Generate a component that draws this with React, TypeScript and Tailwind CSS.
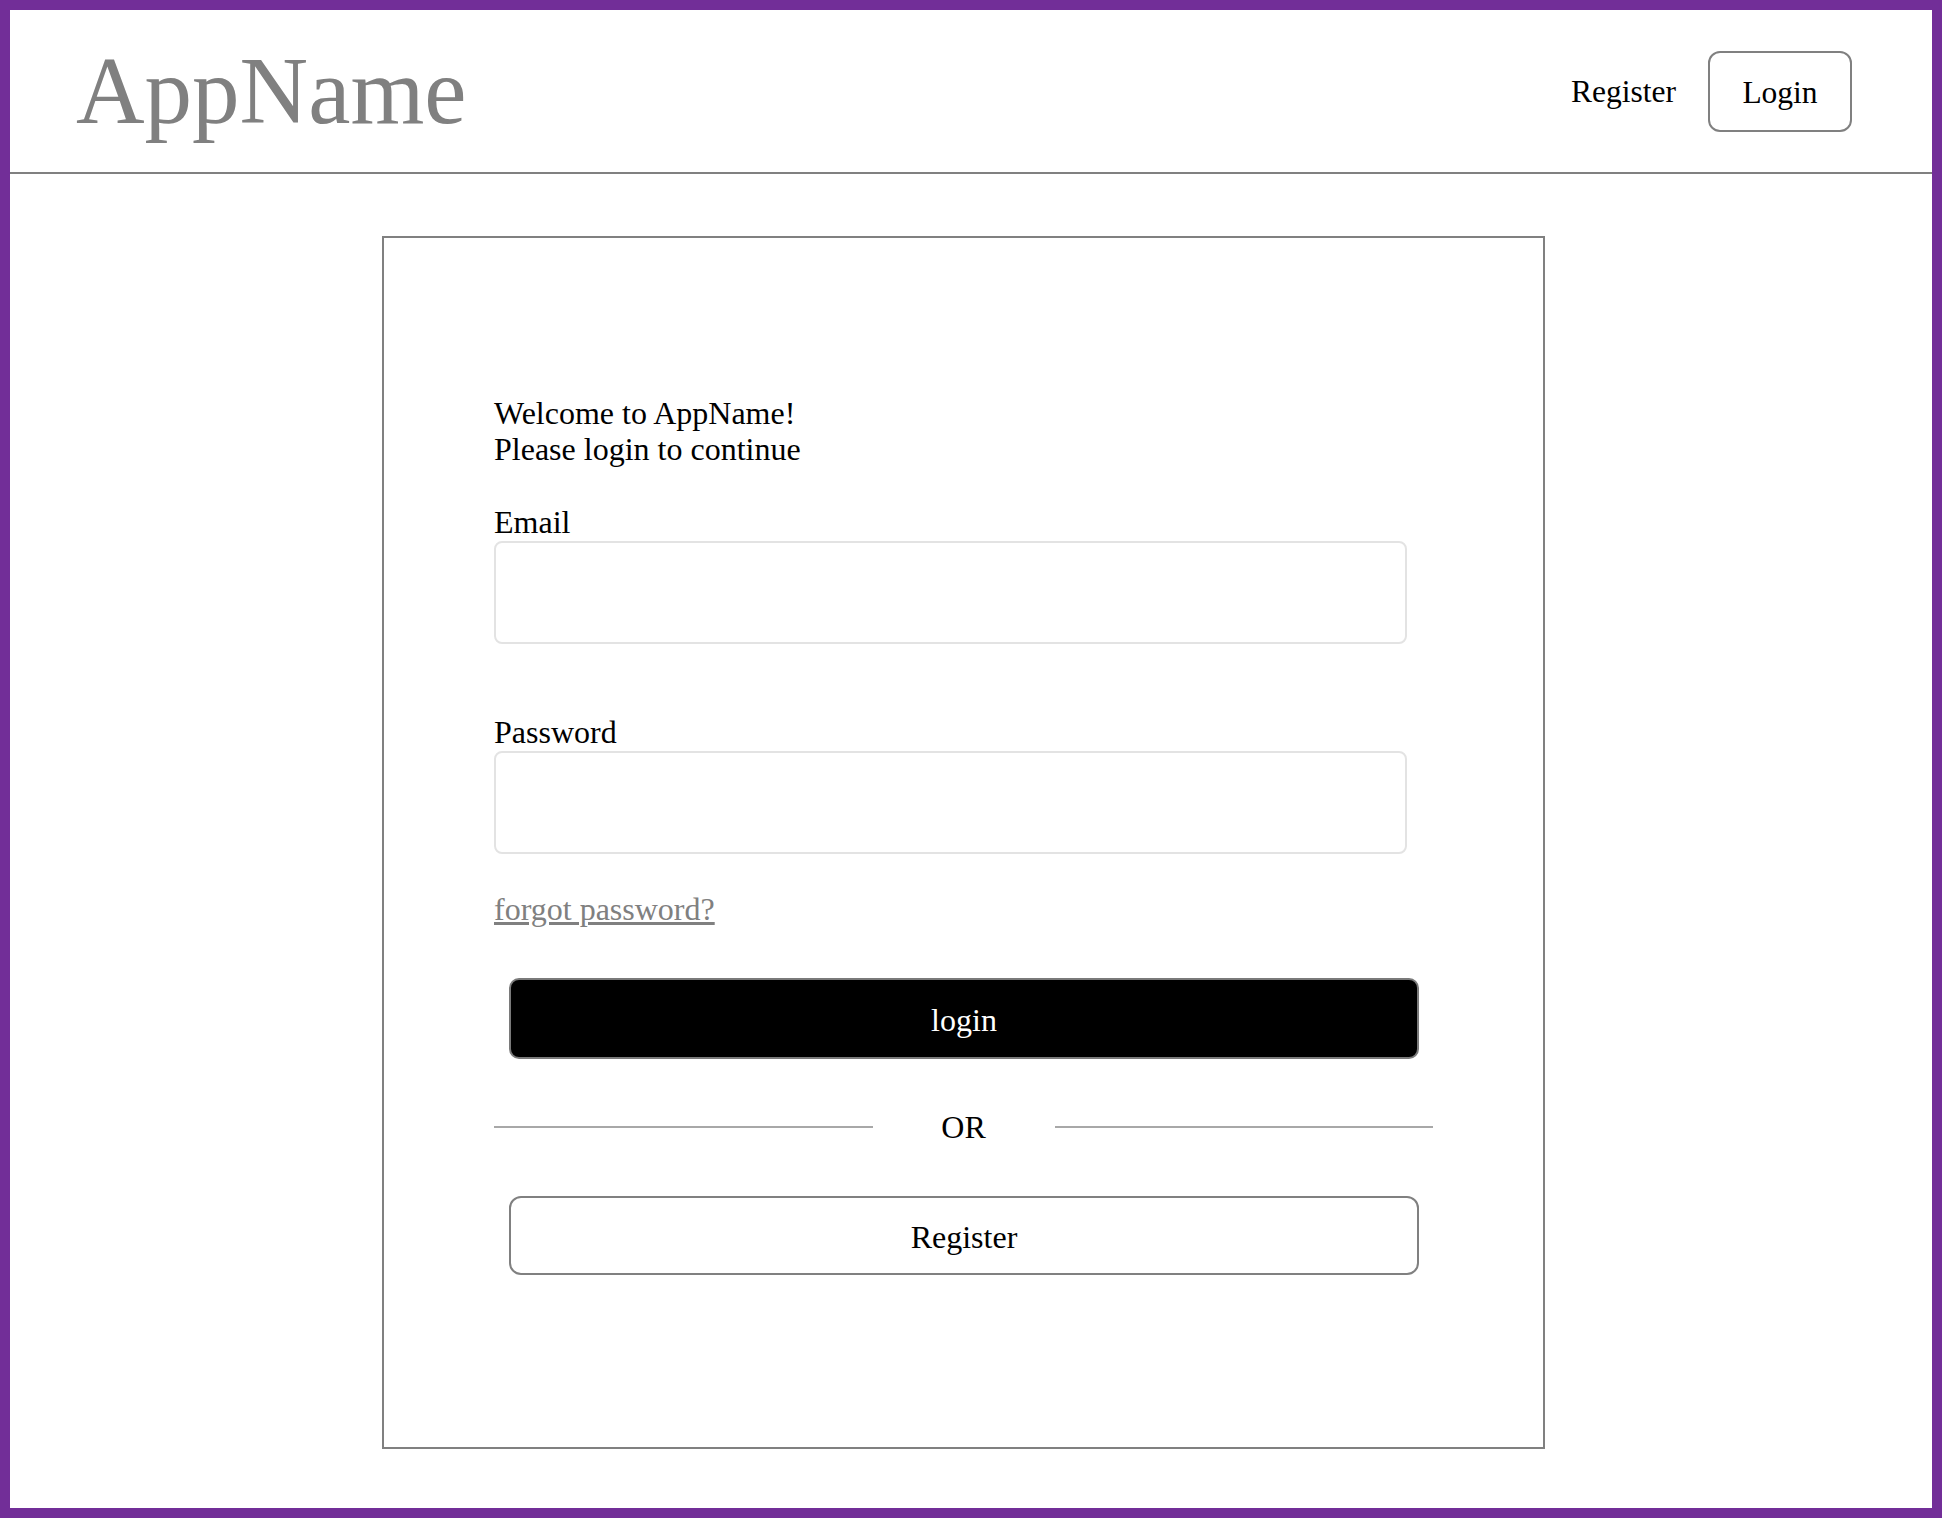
const serif = "font-['Liberation_Serif','Times_New_Roman',serif]";

const Header = () => (
  <header className="h-[164px] border-b-2 border-[#808080] flex items-center justify-between pl-[66px] pr-[80px]">
    <div className="text-[95px] leading-[110px] text-[#808080]">AppName</div>
    <nav className="flex items-center gap-[32px] text-[31.5px]">
      <a href="#register" className="pt-[2px] text-black">
        Register
      </a>
      <button className="w-[144px] h-[81px] pt-[3px] rounded-[12px] border-2 border-[#808080] bg-white text-black">
        Login
      </button>
    </nav>
  </header>
);

const Field = ({ label, type, className }: { label: string; type: string; className: string }) => (
  <label className={`block ${className}`}>
    <span className="block">{label}</span>
    <input
      type={type}
      className="block mt-[1px] w-[913px] h-[103px] rounded-[8px] border-2 border-[#e3e3e3] bg-white px-4 outline-none"
    />
  </label>
);

const LoginCard = () => (
  <section className="ml-[372px] mt-[62px] w-[1163px] h-[1213px] border-2 border-[#808080] pt-[157px] px-[110px]">
    <p>
      Welcome to AppName!
      <br />
      Please login to continue
    </p>

    <Field label="Email" type="email" className="mt-[37px]" />
    <Field label="Password" type="password" className="mt-[70px]" />

    <a href="#forgot" className="block mt-[37px] w-fit text-[#808080] underline">
      forgot password?
    </a>

    <button className="block mt-[51px] ml-[15px] w-[910px] h-[81px] pt-[3px] rounded-[10px] border-2 border-[#7a7a7a] bg-black text-white">
      login
    </button>

    <div className="mt-[50px] flex items-center h-[36px]">
      <div className="flex-1 h-[2px] bg-[#a8a8a8]" />
      <span className="w-[182px] text-center">OR</span>
      <div className="flex-1 h-[2px] bg-[#a8a8a8]" />
    </div>

    <button className="block mt-[51px] ml-[15px] w-[910px] h-[79px] pt-[3px] rounded-[12px] border-2 border-[#808080] bg-white text-black">
      Register
    </button>
  </section>
);

export default function App() {
  return (
    <div
      className={`h-[1518px] w-full border-[10px] border-[#722e98] bg-white text-black text-[32px] leading-[36px] ${serif}`}
    >
      <Header />
      <LoginCard />
    </div>
  );
}
